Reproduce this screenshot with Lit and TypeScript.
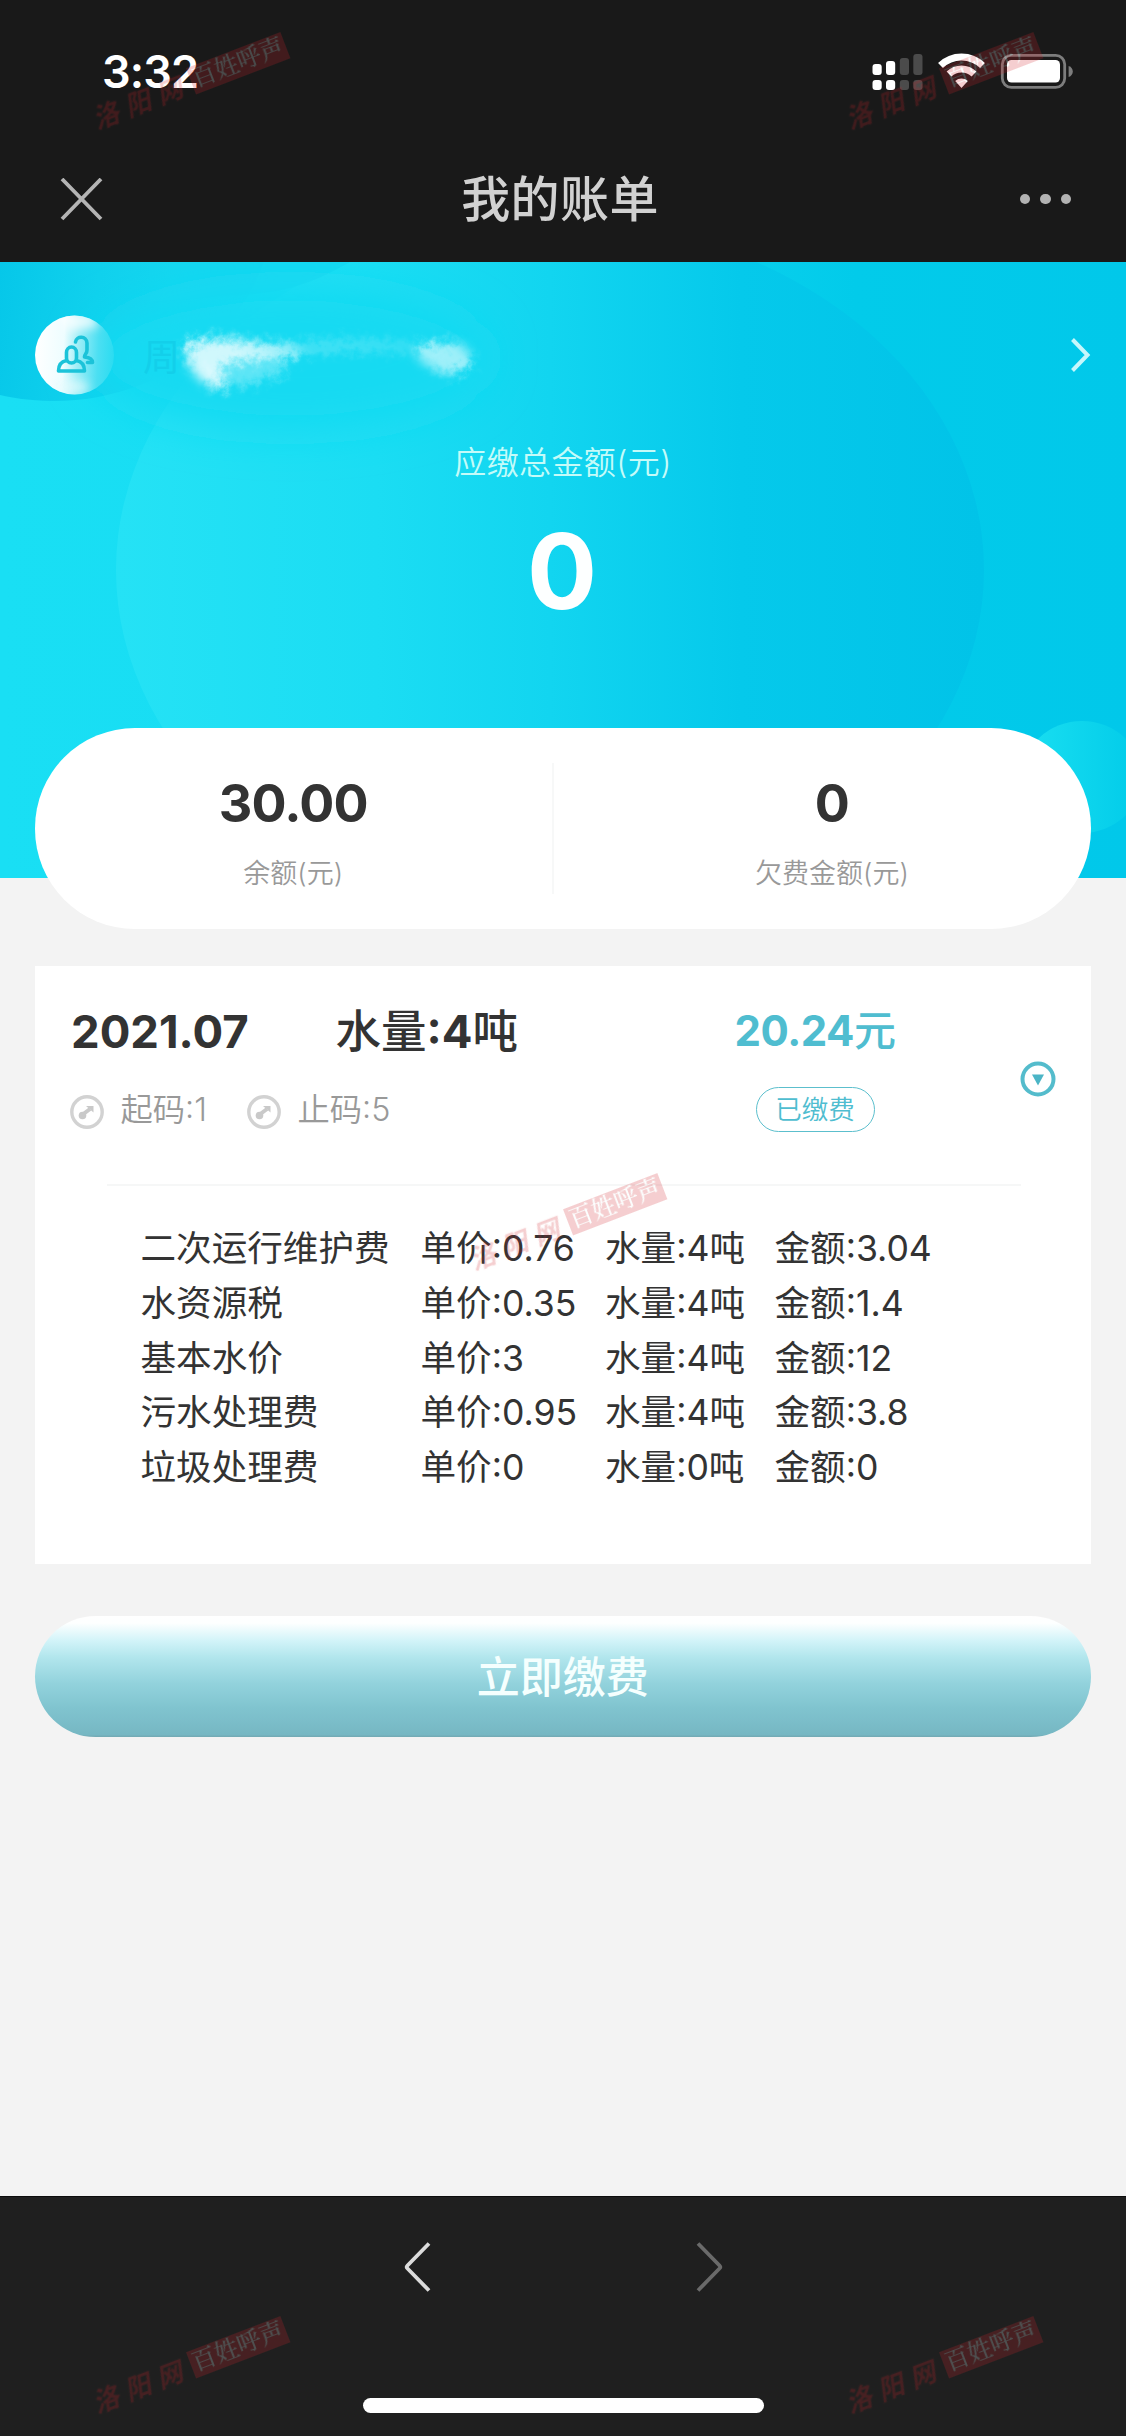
import { LitElement, html, css, svg } from "lit";
import { customElement, property } from "lit/decorators.js";

interface FeeRow {
  name: string;
  price: string;
  volume: string;
  amount: string;
}

const FEES: FeeRow[] = [
  { name: "二次运行维护费", price: "0.76", volume: "4", amount: "3.04" },
  { name: "水资源税", price: "0.35", volume: "4", amount: "1.4" },
  { name: "基本水价", price: "3", volume: "4", amount: "12" },
  { name: "污水处理费", price: "0.95", volume: "4", amount: "3.8" },
  { name: "垃圾处理费", price: "0", volume: "0", amount: "0" },
];

@customElement("status-bar")
export class StatusBar extends LitElement {
  static styles = css`
    :host {
      display: flex;
      justify-content: space-between;
      align-items: center;
      box-sizing: border-box;
      height: 144px;
      padding: 0 52px 0 102px;
      color: #fff;
    }
    .time {
      font-size: 45px;
      font-weight: 600;
      line-height: 54px;
      letter-spacing: -0.9px;
    }
    .icons {
      display: block;
      width: 202px;
      height: 38px;
    }
  `;

  render() {
    return html`
      <span class="time">3:32</span>
      <svg class="icons" viewBox="872 53 202 38">
        <g fill="#fff">
          <rect x="872.5" y="64" width="9.2" height="11" rx="3" />
          <rect x="886" y="61" width="9.2" height="14" rx="3" />
          <rect x="872.5" y="80" width="9.2" height="10" rx="3" />
          <rect x="886" y="80" width="9.2" height="10" rx="3" />
        </g>
        <g fill="#4b4b4b">
          <rect x="899.8" y="58" width="9.2" height="17" rx="3" />
          <rect x="913.3" y="54" width="9.2" height="21" rx="3" />
          <rect x="899.8" y="80" width="9.2" height="10" rx="3" />
          <rect x="913.3" y="80" width="9.2" height="10" rx="3" />
        </g>
        <g fill="none" stroke="#fff" stroke-width="7">
          <path d="M940.5 65.5a30 30 0 0 1 42 0" />
          <path d="M949 74a18 18 0 0 1 25 0" />
        </g>
        <path d="M961.5 88l-6.3-7a9.5 9.5 0 0 1 12.6 0z" fill="#fff" />
        <rect x="1002.3" y="55.3" width="62.4" height="32" rx="9" fill="none" stroke="#7d7d7d" stroke-width="2.8" />
        <rect x="1007" y="60" width="53" height="22.6" rx="4.5" fill="#fff" />
        <path d="M1068.6 66c5.6 1.600 5.600 9.400 0 11z" fill="#7d7d7d" />
      </svg>
    `;
  }
}

@customElement("nav-bar")
export class NavBar extends LitElement {
  static styles = css`
    :host {
      display: grid;
      grid-template-columns: 1fr auto 1fr;
      align-items: center;
      box-sizing: border-box;
      height: 118px;
      padding: 0 56px 8px 60px;
    }
    .close {
      display: block;
      width: 43px;
      height: 43px;
    }
    .title {
      margin: 2px 4px 0 -6px;
      font-size: 49px;
      font-weight: 500;
      line-height: 60px;
      letter-spacing: 0.4px;
      color: #d1d1d1;
    }
    .more {
      display: flex;
      justify-content: flex-end;
      gap: 10px;
      margin-right: -1px;
    }
    .dot {
      width: 10.3px;
      height: 10.3px;
      border-radius: 50%;
      background: #b2b2b2;
    }
  `;

  render() {
    return html`
      <svg class="close" viewBox="0 0 43 43">
        <path d="M2 1L41 41M41 1L2 41" stroke="#b4b4b4" stroke-width="3.8" />
      </svg>
      <span class="title">我的账单</span>
      <span class="more"><i class="dot"></i><i class="dot"></i><i class="dot"></i></span>
    `;
  }
}

@customElement("account-hero")
export class AccountHero extends LitElement {
  static styles = css`
    :host {
      display: block;
      position: relative;
      height: 615.5px;
      overflow: hidden;
      background: linear-gradient(90deg, #19dff4 0%, #18dcf3 30%, #10d4f0 52%, #02cbea 76%, #01c8ea 100%);
    }
    .backdrop {
      position: absolute;
      inset: 0;
      width: 1126px;
      height: 616px;
    }
    .content {
      position: relative;
      display: flex;
      flex-direction: column;
      align-items: stretch;
    }
    .account {
      display: flex;
      align-items: center;
      padding: 53px 35px 0;
      height: 80px;
    }
    .avatar {
      width: 80px;
      height: 80px;
      flex: none;
    }
    .name {
      flex: 1;
      padding: 6px 0 0 28px;
      font-size: 37px;
      line-height: 50px;
      color: #13cfea;
    }
    .chevron {
      width: 21px;
      height: 36px;
    }
    .label {
      margin-top: 46px;
      text-align: center;
      font-size: 32px;
      line-height: 44px;
      letter-spacing: 0.4px;
      font-weight: 350;
      color: #c4fbf9;
    }
    .total {
      margin-top: 21px;
      padding-right: 2px;
      text-align: center;
      font-size: 104px;
      line-height: 130px;
      font-weight: 700;
      color: #fdffff;
    }
  `;

  private backdrop() {
    return svg`
      <defs>
        <linearGradient id="disc">
          <stop offset="0" stop-color="#25e2f5" />
          <stop offset=".3" stop-color="#1bddf3" />
          <stop offset=".5" stop-color="#12d5f0" />
          <stop offset=".72" stop-color="#05c9eb" />
          <stop offset="1" stop-color="#01c3e8" />
        </linearGradient>
        <linearGradient id="corner" gradientUnits="userSpaceOnUse" x1="0" y1="0" x2="220" y2="30">
          <stop offset="0" stop-color="#06c7e9" />
          <stop offset=".45" stop-color="#10d1ed" />
          <stop offset="1" stop-color="#17d8f1" />
        </linearGradient>
        <linearGradient id="bubble">
          <stop offset="0" stop-color="#1adff1" />
          <stop offset="1" stop-color="#01cbe9" />
        </linearGradient>
        <filter id="smear" x="-20%" y="-60%" width="140%" height="220%">
          <feGaussianBlur stdDeviation="5.500" result="b" />
          <feTurbulence type="fractalNoise" baseFrequency=".13" numOctaves="3" seed="4" />
          <feDisplacementMap in="b" scale="15" />
        </filter>
        <filter id="soft" x="-30%" y="-80%" width="160%" height="260%">
          <feGaussianBlur stdDeviation="22" />
        </filter>
      </defs>
      <ellipse cx="550" cy="308" rx="434" ry="350" fill="url(#disc)" />
      <ellipse cx="54" cy="-60" rx="220" ry="199" fill="url(#corner)" />
      <path d="M150 0H350C310 22 290 30 230 34L150 40z" fill="#15d6f0" opacity=".7" />
      <ellipse cx="290" cy="96" rx="200" ry="72" fill="#18daf2" filter="url(#soft)" />
      <g filter="url(#smear)" fill="#fff">
        <path d="M184 84C200 76 225 74 245 80L300 86L300 92C270 96 240 98 222 104C214 112 228 120 226 124C212 130 196 116 190 106z" opacity=".8" />
        <path d="M200 108C230 96 270 100 290 94L280 112C260 122 225 128 205 124z" opacity=".3" />
        <path d="M290 84C340 74 380 80 440 84L440 90C390 88 340 86 300 94z" opacity=".24" />
        <path d="M418 86C440 78 460 80 468 88C474 98 468 110 452 112C440 112 430 104 418 98z" opacity=".58" />
      </g>
      <ellipse cx="1082" cy="515" rx="60" ry="56" fill="url(#bubble)" />
    `;
  }

  render() {
    return html`
      <svg class="backdrop" viewBox="0 0 1126 616">${this.backdrop()}</svg>
      <div class="content">
        <div class="account">
          <svg class="avatar" viewBox="0 0 80 80">
            <defs>
              <linearGradient id="face" x1="0" y1=".45" x2="1" y2=".5">
                <stop offset="0" stop-color="#fff" />
                <stop offset=".36" stop-color="#eefdff" />
                <stop offset=".54" stop-color="#9feef7" />
                <stop offset=".8" stop-color="#4bdff2" />
                <stop offset="1" stop-color="#2bdcf1" />
              </linearGradient>
              <filter id="puff" x="-40%" y="-40%" width="180%" height="180%">
                <feGaussianBlur stdDeviation="5" />
              </filter>
              <clipPath id="round"><circle cx="39.500" cy="40" r="39.500" /></clipPath>
            </defs>
            <circle cx="39.500" cy="40" r="39.500" fill="url(#face)" />
            <g clip-path="url(#round)">
              <path d="M22 -2H58L64 12L34 16z" fill="#fff" opacity=".75" filter="url(#puff)" />
              <ellipse cx="36" cy="72" rx="18" ry="7" fill="#e6fbfd" opacity=".7" filter="url(#puff)" />
            </g>
            <g fill="none" stroke="#1bc3d9" stroke-width="3.600" stroke-linejoin="round" stroke-linecap="round">
              <path d="M40.500 27c1-6.500 11-6.500 11.500 1v7c0 4-2.500 4-2.500 7c5 .5 8 2 8 5.500h-5" />
              <path d="M31.500 45.500c-5 1-8 3.500-8 10.500H49.500c0-7-3-9.500-8-10.500" />
              <path d="M31.500 37.500a5 5.500 0 0 1 10 0V43a5 5 0 0 1-10 0z" />
            </g>
          </svg>
          <span class="name">周</span>
          <svg class="chevron" viewBox="0 0 21 36">
            <path d="M2.500 2.500L17.500 18L2.500 33.500" fill="none" stroke="#c6f7fc" stroke-width="4" />
          </svg>
        </div>
        <div class="label">应缴总金额(元)</div>
        <div class="total">0</div>
      </div>
    `;
  }
}

@customElement("balance-card")
export class BalanceCard extends LitElement {
  static styles = css`
    :host {
      display: flex;
      position: relative;
      box-sizing: border-box;
      height: 200.5px;
      margin: -149.5px 35.5px 0 35px;
      padding: 35px 0;
      border-radius: 100px;
      background: #fff;
    }
    .item {
      flex: none;
      box-sizing: border-box;
      width: 516.5px;
      display: flex;
      flex-direction: column;
      align-items: center;
      padding-top: 10px;
    }
    .item + .item {
      flex: 1;
      border-left: 2px solid #f7f8f8;
      padding-left: 20px;
    }
    .value {
      font-size: 52px;
      line-height: 62px;
      font-weight: 700;
      letter-spacing: -0.8px;
      color: #333;
    }
    .caption {
      margin-top: 21px;
      font-size: 27px;
      line-height: 36px;
      font-weight: 350;
      color: #999;
    }
  `;

  render() {
    return html`
      <div class="item">
        <span class="value">30.00</span>
        <span class="caption">余额(元)</span>
      </div>
      <div class="item">
        <span class="value">0</span>
        <span class="caption">欠费金额(元)</span>
      </div>
    `;
  }
}

@customElement("bill-card")
export class BillCard extends LitElement {
  @property({ attribute: false }) fees: FeeRow[] = [];

  static styles = css`
    :host {
      display: block;
      box-sizing: border-box;
      height: 598.5px;
      margin: 37px 35.5px 0 35px;
      background: #fff;
    }
    .summary {
      display: flex;
      height: 218px;
      margin: 0 34.5px 0 36px;
    }
    .usage {
      width: 560px;
      padding-top: 39px;
    }
    .headline {
      display: grid;
      grid-template-columns: 264.5px auto;
      font-size: 45.5px;
      line-height: 54px;
      font-weight: 700;
      color: #333;
    }
    .volume {
      font-weight: 500;
    }
    .volume b {
      font-weight: 700;
    }
    .readings {
      display: grid;
      grid-template-columns: 177px auto;
      margin: 29px 0 0 -1.5px;
      font-size: 32.3px;
      line-height: 44px;
      font-weight: 350;
      color: #999;
    }
    .reading {
      display: flex;
      align-items: center;
      gap: 17px;
    }
    .gauge {
      width: 34px;
      height: 34px;
      margin-top: 4px;
    }
    .payment {
      width: 296px;
      margin-left: 36px;
      flex: none;
      display: flex;
      flex-direction: column;
      align-items: center;
      padding-top: 39px;
    }
    .amount {
      font-size: 42px;
      line-height: 52px;
      font-weight: 700;
      letter-spacing: -0.5px;
      color: #4fbdd0;
    }
    .amount span {
      font-weight: 500;
    }
    .badge {
      box-sizing: border-box;
      width: 119px;
      height: 45px;
      margin-top: 30px;
      border: 1.5px solid #5cbfcd;
      border-radius: 23px;
      text-align: center;
      font-size: 26.5px;
      line-height: 42px;
      font-weight: 350;
      color: #4fbdd0;
    }
    .toggle {
      flex: none;
      width: 36px;
      height: 36px;
      margin: 95px 0 0 auto;
    }
    .rule {
      height: 2px;
      margin: 0 70px 0 72px;
      background: #f6f7f7;
    }
    .fees {
      display: grid;
      grid-template-columns: 280px 184.5px 169.5px auto;
      margin: 36.5px 0 0 105.5px;
      font-size: 35.6px;
      line-height: 54.8px;
      color: #333;
      white-space: nowrap;
      font-weight: 370;
    }
  `;

  private gauge() {
    return html`
      <svg class="gauge" viewBox="0 0 34 34">
        <circle cx="17" cy="17" r="15.2" fill="none" stroke="#d2d2d2" stroke-width="3.400" />
        <circle cx="12.500" cy="20.500" r="3.800" fill="#c9c9c9" />
        <path d="M12 20L20 14" stroke="#c9c9c9" stroke-width="4" />
        <path d="M16 11H23.500V17.500z" fill="#c9c9c9" />
      </svg>
    `;
  }

  render() {
    return html`
      <div class="summary">
        <div class="usage">
          <div class="headline"><span>2021.07</span><span class="volume">水量<b>:4</b>吨</span></div>
          <div class="readings">
            <span class="reading">${this.gauge()}起码:1</span>
            <span class="reading">${this.gauge()}止码:5</span>
          </div>
        </div>
        <div class="payment">
          <span class="amount">20.24<span>元</span></span>
          <span class="badge">已缴费</span>
        </div>
        <svg class="toggle" viewBox="0 0 36 36">
          <circle cx="18" cy="18" r="15.500" fill="none" stroke="#54bccc" stroke-width="4" />
          <path d="M12 13.500H24L18 24.500z" fill="#4bb5c6" />
        </svg>
      </div>
      <div class="rule"></div>
      <div class="fees">
        ${this.fees.map(
          (fee) => html`
            <span>${fee.name}</span>
            <span>单价:${fee.price}</span>
            <span>水量:${fee.volume}吨</span>
            <span>金额:${fee.amount}</span>
          `,
        )}
      </div>
    `;
  }
}

@customElement("browser-bar")
export class BrowserBar extends LitElement {
  static styles = css`
    :host {
      display: flex;
      flex-direction: column;
      align-items: center;
      box-sizing: border-box;
      height: 240px;
      padding-top: 45px;
      background: #1f1f1f;
      border-top: 1px solid #0c0c0c;
    }
    .arrows {
      display: flex;
      gap: 265px;
    }
    .arrow {
      display: block;
      width: 27px;
      height: 50px;
    }
    .home {
      width: 401px;
      height: 15px;
      margin-top: 106px;
      border-radius: 8px;
      background: #fff;
    }
  `;

  render() {
    return html`
      <div class="arrows">
        <svg class="arrow" viewBox="0 0 27 50">
          <path d="M25 1.500L3.500 23.500Q2 25 3.500 26.500L25 48.500" fill="none" stroke="#dcdcdc" stroke-width="3.800" />
        </svg>
        <svg class="arrow" viewBox="0 0 27 50">
          <path d="M2 1.500L23.500 23.500Q25 25 23.500 26.500L2 48.500" fill="none" stroke="#6a6a6a" stroke-width="3.800" />
        </svg>
      </div>
      <div class="home"></div>
    `;
  }
}

@customElement("site-stamp")
export class SiteStamp extends LitElement {
  static styles = css`
    :host {
      display: flex;
      align-items: center;
      position: absolute;
      width: 206px;
      transform: rotate(-21deg);
      opacity: 0.22;
      pointer-events: none;
      white-space: nowrap;
    }
    .site {
      width: 102px;
      padding-top: 3px;
      font-size: 26px;
      line-height: 31px;
      font-weight: 700;
      letter-spacing: 8px;
      color: #cf2026;
      transform: skewX(-14deg);
    }
    .forum {
      width: 101px;
      height: 28px;
      background: #cf2026;
      color: #f2ffff;
      font-family: "Liberation Serif", "Noto Serif CJK SC", "Noto Sans CJK SC", serif;
      font-size: 24px;
      line-height: 27px;
      font-weight: 500;
      text-align: center;
    }
  `;

  render() {
    return html`<span class="site">洛阳网</span><span class="forum">百姓呼声</span>`;
  }
}

@customElement("app-root")
export class AppRoot extends LitElement {
  static styles = css`
    :host {
      display: block;
    }
    .page {
      position: relative;
      display: flex;
      flex-direction: column;
      width: 1126px;
      height: 2436px;
      overflow: hidden;
      background: #f3f3f3;
      font-family: Inter, "Noto Sans CJK SC", sans-serif;
    }
    .chrome {
      height: 262px;
      background: #191919;
    }
    .pay {
      height: 121px;
      margin: 52px 35.5px 0 35px;
      padding: 2px 0 0;
      border: 0;
      border-radius: 61px;
      background: linear-gradient(180deg, #fff 0%, #fdffff 6%, #d3f4f9 20%, #b2e6ed 34%, #92d2dc 56%, #80c4cf 76%, #76b7c3 98%, #72a8b2 100%);
      font: inherit;
      font-size: 43px;
      font-weight: 500;
      line-height: 119px;
      color: #f5fffe;
    }
    .spacer {
      flex: 1;
    }
    .stamp-a {
      left: 89px;
      top: 64px;
    }
    .stamp-b {
      left: 842px;
      top: 64px;
    }
    .stamp-c {
      left: 466px;
      top: 1205px;
    }
    .stamp-d {
      left: 89px;
      top: 2348px;
    }
    .stamp-e {
      left: 842px;
      top: 2348px;
    }
  `;

  render() {
    return html`
      <div class="page">
        <header class="chrome">
          <status-bar></status-bar>
          <nav-bar></nav-bar>
        </header>
        <account-hero></account-hero>
        <balance-card></balance-card>
        <bill-card .fees=${FEES}></bill-card>
        <button class="pay">立即缴费</button>
        <div class="spacer"></div>
        <browser-bar></browser-bar>
        <site-stamp class="stamp-a"></site-stamp>
        <site-stamp class="stamp-b"></site-stamp>
        <site-stamp class="stamp-c"></site-stamp>
        <site-stamp class="stamp-d"></site-stamp>
        <site-stamp class="stamp-e"></site-stamp>
      </div>
    `;
  }
}
